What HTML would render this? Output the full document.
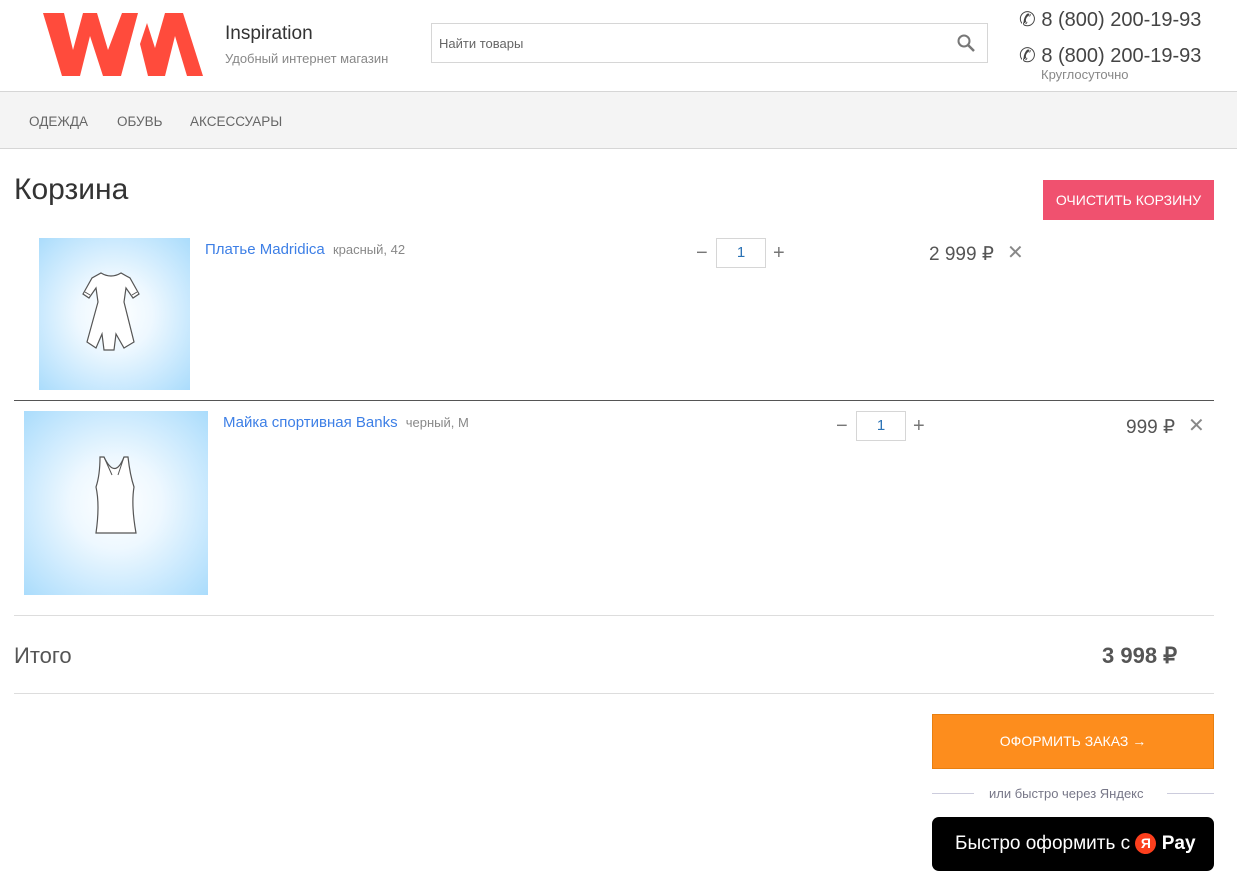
<!DOCTYPE html>
<html><head><meta charset="utf-8"><style>
*{box-sizing:border-box;margin:0;padding:0}
body{width:1237px;height:888px;background:#fff;font-family:"Liberation Sans","Noto Sans CJK SC",sans-serif;color:#333;position:relative;overflow:hidden}
.a{position:absolute;white-space:nowrap}
.img{position:absolute;background:radial-gradient(circle at center,#fff 0%,#eef8ff 35%,#aadcfc 100%)}
.qty{position:absolute;width:50px;height:30px;border:1px solid #d6d6d6;text-align:center;line-height:28px;color:#2a72b5;font-size:15px}
.pm{position:absolute;color:#777;font-size:20px;line-height:20px}
</style></head><body>
<svg class="a" style="left:0;top:0" width="220" height="90">
<polygon fill="#ff4b3c" points="43,13 64,13 73,50 83,13 97,13 108,50 122,13 138,13 121,76 103,76 90,36 80,76 62,76"/>
<polygon fill="#ff4b3c" points="140,44 147,23 155,48 165,13 183,13 203,76 187,76 175,36 165,76 148,76"/>
</svg>
<div class="a" style="left:225px;top:23px;font-size:19px;color:#333">Inspiration</div>
<div class="a" style="left:225px;top:51px;font-size:13px;color:#888">Удобный интернет магазин</div>
<div class="a" style="left:431px;top:23px;width:557px;height:40px;border:1px solid #d6d6d6"></div>
<div class="a" style="left:439px;top:36px;font-size:13px;color:#666">Найти товары</div>
<svg class="a" style="left:956px;top:33px" width="20" height="20"><circle cx="8" cy="8" r="5.5" fill="none" stroke="#777" stroke-width="2"/><line x1="12" y1="12" x2="18" y2="18" stroke="#777" stroke-width="2.5"/></svg>
<div class="a" style="left:1019px;top:7px;font-size:20px;color:#444">&#9990;&nbsp;8 (800) 200-19-93</div>
<div class="a" style="left:1019px;top:43px;font-size:20px;color:#444">&#9990;&nbsp;8 (800) 200-19-93</div>
<div class="a" style="left:1041px;top:67px;font-size:13px;color:#888">Круглосуточно</div>
<div class="a" style="left:0;top:91px;width:1237px;height:58px;background:#f4f4f4;border-top:1px solid #d6d6d6;border-bottom:1px solid #d6d6d6"></div>
<div class="a" style="left:29px;top:114px;font-size:13.5px;color:#666">ОДЕЖДА</div>
<div class="a" style="left:117px;top:114px;font-size:13.5px;color:#666">ОБУВЬ</div>
<div class="a" style="left:190px;top:114px;font-size:13.5px;color:#666">АКСЕССУАРЫ</div>
<div class="a" style="left:14px;top:173px;font-size:30px;color:#333">Корзина</div>
<div class="a" style="left:1043px;top:180px;width:171px;height:40px;background:#f0516f;color:#fff;font-size:14px;text-align:center;line-height:40px">ОЧИСТИТЬ КОРЗИНУ</div>

<div class="img" style="left:39px;top:238px;width:151px;height:152px"></div>
<svg class="a" style="left:80px;top:270px" width="62" height="86"><path d="M21 3 Q31 9 41 3 L50 8 L59 24 L53 28 L46 18 L44 32 L54 72 L44 78 L36 64 L34 80 L24 80 L22 64 L16 78 L7 72 L18 32 L16 18 L9 28 L3 24 L12 8 Z" fill="#fff" stroke="#555" stroke-width="1.2"/><path d="M5 22 L10 25 M57 22 L52 25" stroke="#555"/></svg>
<div class="a" style="left:205px;top:241px;font-size:15px;color:#3d7fe6">Платье Madridica <span style="font-size:13px;color:#888;margin-left:4px">красный, 42</span></div>
<div class="pm" style="left:696px;top:243px">−</div>
<div class="qty" style="left:716px;top:238px">1</div>
<div class="pm" style="left:773px;top:243px">+</div>
<div class="a" style="left:929px;top:243px;font-size:19px;color:#555">2 999 ₽</div>
<div class="a" style="left:1007px;top:240px;font-size:20px;color:#888">✕</div>
<div class="a" style="left:14px;top:400px;width:1200px;border-top:1px solid #555"></div>

<div class="img" style="left:24px;top:411px;width:184px;height:184px"></div>
<svg class="a" style="left:90px;top:455px" width="50" height="85"><path d="M10 2 L14 2 Q25 25 34 2 L38 2 Q40 20 44 32 Q41 50 46 78 L6 78 Q10 50 6 32 Q10 20 10 2 Z" fill="#fff" stroke="#555" stroke-width="1.2"/><path d="M14 2 L22 20 M34 2 L28 20" stroke="#555" fill="none"/></svg>
<div class="a" style="left:223px;top:414px;font-size:15px;color:#3d7fe6">Майка спортивная Banks <span style="font-size:13px;color:#888;margin-left:4px">черный, M</span></div>
<div class="pm" style="left:836px;top:416px">−</div>
<div class="qty" style="left:856px;top:411px">1</div>
<div class="pm" style="left:913px;top:416px">+</div>
<div class="a" style="left:1126px;top:416px;font-size:19px;color:#555">999 ₽</div>
<div class="a" style="left:1188px;top:413px;font-size:20px;color:#888">✕</div>

<div class="a" style="left:14px;top:615px;width:1200px;border-top:1px solid #ddd"></div>
<div class="a" style="left:14px;top:643px;font-size:22px;color:#555">Итого</div>
<div class="a" style="left:1102px;top:643px;font-size:22px;color:#555;font-weight:bold">3 998 ₽</div>
<div class="a" style="left:14px;top:693px;width:1200px;border-top:1px solid #ddd"></div>

<div class="a" style="left:932px;top:714px;width:282px;height:55px;background:#fd8d1d;border:1px solid #e87f10;color:#fff;font-size:14px;text-align:center;line-height:53px">ОФОРМИТЬ ЗАКАЗ →</div>
<div class="a" style="left:932px;top:793px;width:42px;border-top:1px solid #ccd"></div>
<div class="a" style="left:1167px;top:793px;width:47px;border-top:1px solid #ccd"></div>
<div class="a" style="left:989px;top:786px;font-size:13px;color:#778">или быстро через Яндекс</div>
<div class="a" style="left:932px;top:817px;width:282px;height:54px;background:#000;border-radius:7px;color:#fff;font-size:19px;line-height:54px;padding-left:23px">Быстро оформить с <span style="display:inline-block;width:21px;height:21px;border-radius:50%;background:#fc3f1d;font-size:14px;line-height:21px;text-align:center;vertical-align:1px;font-weight:bold">Я</span> <b>Pay</b></div>
</body></html>
